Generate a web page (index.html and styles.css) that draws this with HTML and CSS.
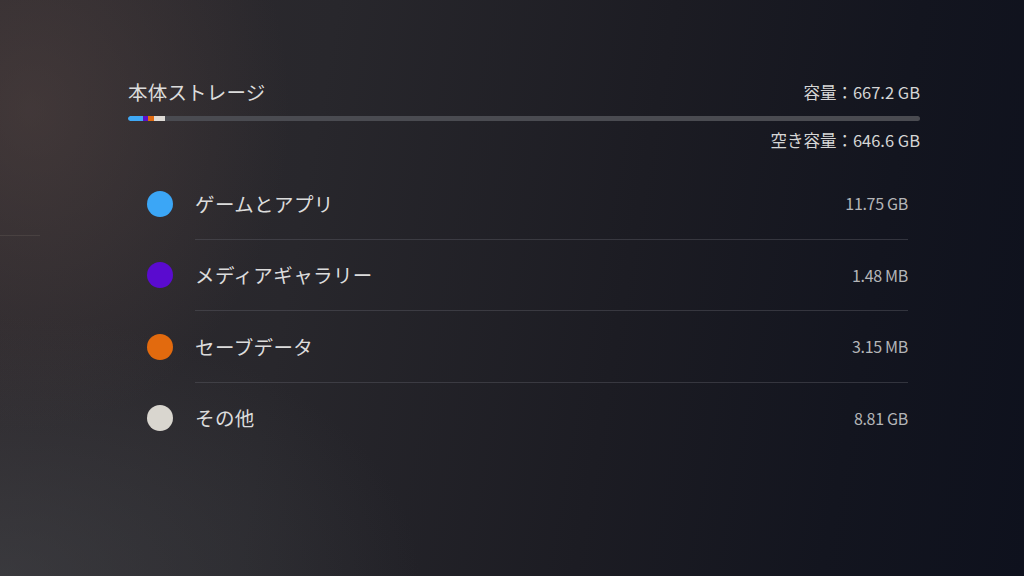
FILE: index.html
```html
<!DOCTYPE html>
<html lang="ja">
<head>
<meta charset="utf-8">
<title>本体ストレージ</title>
<link rel="stylesheet" href="styles.css">
</head>
<body>
<div class="screen">
  <div class="edge-line"></div>
  <main class="storage">
    <div class="head">
      <h1 class="title">本体ストレージ</h1>
      <div class="cap">容量：667.2 GB</div>
    </div>
    <div class="bar">
      <span class="seg seg-blue" style="width:15px"></span>
      <span class="seg seg-purple" style="width:5px"></span>
      <span class="seg seg-orange" style="width:6px"></span>
      <span class="seg seg-grey" style="width:11px"></span>
    </div>
    <div class="free">空き容量：646.6 GB</div>
    <ul class="list">
      <li class="row">
        <span class="dot dot-blue"></span>
        <div class="row-body"><span class="label">ゲームとアプリ</span><span class="value">11.75 GB</span></div>
      </li>
      <li class="row">
        <span class="dot dot-purple"></span>
        <div class="row-body"><span class="label">メディアギャラリー</span><span class="value">1.48 MB</span></div>
      </li>
      <li class="row">
        <span class="dot dot-orange"></span>
        <div class="row-body"><span class="label">セーブデータ</span><span class="value">3.15 MB</span></div>
      </li>
      <li class="row">
        <span class="dot dot-grey"></span>
        <div class="row-body last"><span class="label">その他</span><span class="value">8.81 GB</span></div>
      </li>
    </ul>
  </main>
</div>
</body>
</html>
```
FILE: styles.css
```css
html, body {
  margin: 0;
  padding: 0;
}
body {
  width: 1024px;
  height: 576px;
  overflow: hidden;
  font-family: "Noto Sans CJK JP", "Noto Sans", sans-serif;
  color: #d9d9d9;
}
.screen {
  position: relative;
  width: 1024px;
  height: 576px;
  background:
    radial-gradient(ellipse 260px 320px at 30px 110px, rgba(92, 74, 70, 0.42), rgba(92, 74, 70, 0) 100%),
    radial-gradient(ellipse 420px 260px at 0px 576px, rgba(70, 72, 76, 0.5), rgba(70, 72, 76, 0) 100%),
    linear-gradient(100deg, #2f2b2f 0%, #28272c 30%, #1c1c23 60%, #13151f 82%, #0e111d 100%);
}
.edge-line {
  position: absolute;
  left: 0;
  top: 235px;
  width: 40px;
  height: 1px;
  background: rgba(120, 110, 105, 0.25);
}
.storage {
  padding: 80px 104px 0 128px;
}
.head {
  display: flex;
  justify-content: space-between;
  align-items: center;
  height: 24px;
}
.title {
  margin: 0;
  font-size: 19.5px;
  font-weight: 400;
  line-height: 24px;
  color: #dcdcdc;
  letter-spacing: 0.2px;
}
.cap {
  font-size: 16.5px;
  line-height: 22px;
  color: #d6d6d6;
  font-weight: 400;
}
.bar {
  display: flex;
  margin-top: 12px;
  height: 5px;
  border-radius: 3px;
  background: #4a4b51;
  overflow: hidden;
}
.seg {
  display: block;
  height: 100%;
}
.seg-blue { background: #3fa8f5; border-radius: 3px 0 0 3px; }
.seg-purple { background: #5a12c8; }
.seg-orange { background: #e06a10; }
.seg-grey { background: #dedbd6; }
.free {
  margin-top: 9px;
  text-align: right;
  font-size: 16.5px;
  line-height: 20px;
  color: #d6d6d6;
  font-weight: 400;
}
.list {
  list-style: none;
  margin: 18px 12px 0 18px;
  padding: 0;
}
.row {
  display: flex;
  align-items: stretch;
  height: 71.5px;
}
.dot {
  flex: none;
  width: 26px;
  height: 26px;
  border-radius: 50%;
  align-self: center;
  margin: 0 22px 0 1px;
}
.dot-blue { background: #3ba6f6; }
.dot-purple { background: #5a0bcf; }
.dot-orange { background: #e26a0e; }
.dot-grey { background: #d9d6cf; }
.row-body {
  flex: 1;
  display: flex;
  align-items: center;
  justify-content: space-between;
  border-bottom: 1px solid rgba(90, 92, 100, 0.45);
}
.row-body.last {
  border-bottom-color: transparent;
}
.label {
  font-size: 19.5px;
  color: #dcdcdc;
  letter-spacing: 0.4px;
}
.value {
  font-size: 16px;
  color: #b4b5b8;
  letter-spacing: -0.3px;
}
```
